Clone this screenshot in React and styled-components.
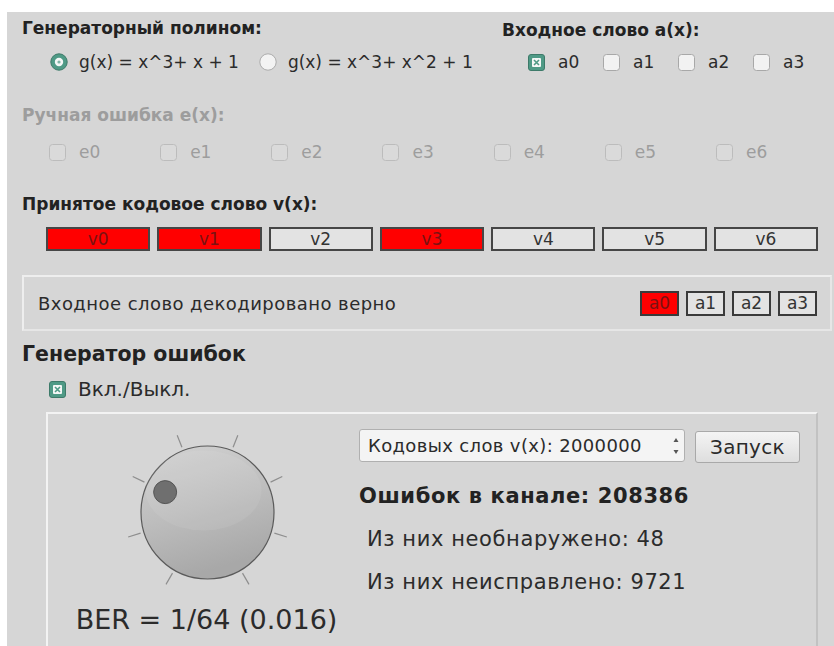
import React from "react";
import styled, { createGlobalStyle } from "styled-components";

const Global = createGlobalStyle`
  html, body { margin: 0; padding: 0; background: #ffffff; }
  body { font-family: "DejaVu Sans", "Noto Sans", sans-serif; overflow: hidden; }
`;

const TEAL = "#4f9a86";

const Window = styled.div`
  margin: 12px 0 0 7px;
  width: 827px;
  height: 634px;
  background: #d6d6d6;
  color: #2b2b2b;
  overflow: hidden;
  padding-left: 15px;
  box-sizing: border-box;
`;

const TopGrid = styled.div`
  display: flex;
`;

const Column = styled.div`
  width: ${(p) => p.$w || "auto"};
`;

const Title = styled.div`
  font-weight: bold;
  font-size: ${(p) => p.$size || 17}px;
  line-height: ${(p) => p.$lh || 20}px;
  height: ${(p) => p.$lh || 20}px;
  margin-top: ${(p) => p.$top || 0}px;
  color: ${(p) => (p.$muted ? "#9d9d9d" : "#222")};
  white-space: nowrap;
`;

const Row = styled.div`
  display: flex;
  align-items: center;
  height: 20px;
  margin-top: ${(p) => p.$top || 0}px;
  padding-left: ${(p) => p.$pad || 0}px;
  gap: ${(p) => p.$gap || 0}px;
  font-size: 17px;
  white-space: nowrap;
`;

const Option = styled.label`
  display: flex;
  align-items: center;
  gap: ${(p) => p.$gap || 13}px;
  width: ${(p) => p.$w || "auto"};
  color: ${(p) => (p.$muted ? "#9d9d9d" : "#2b2b2b")};
  font-size: ${(p) => p.$size || 17}px;
`;

const ErrorGrid = styled.div`
  display: grid;
  grid-template-columns: repeat(7, 111.17px);
  align-items: center;
  height: 20px;
  margin-top: 17px;
  padding-left: 27px;
`;

const BitGrid = styled.div`
  display: grid;
  grid-template-columns: repeat(7, 104.3px);
  column-gap: 7px;
  margin-top: 13px;
  padding-left: 24px;
`;

const Bit = styled.div`
  height: 24px;
  box-sizing: border-box;
  border: 2px solid #464646;
  background: ${(p) => (p.$on ? "#ff0000" : "#e3e3e3")};
  color: ${(p) => (p.$on ? "#7a1212" : "#333")};
  font-size: 17px;
  line-height: 20px;
  text-align: center;
`;

const ResultPanel = styled.div`
  display: flex;
  align-items: center;
  justify-content: space-between;
  margin-top: 24px;
  width: 810px;
  height: 56px;
  box-sizing: border-box;
  border: 2px solid #eeeeee;
  border-right-color: #e6e6e6;
  border-bottom-color: #e6e6e6;
  padding: 0 13px 0 14px;
`;

const ResultText = styled.span`
  font-size: 18px;
  letter-spacing: 0.45px;
  white-space: nowrap;
`;

const SmallBits = styled.div`
  display: flex;
  gap: 7px;
`;

const SmallBit = styled.div`
  width: 39px;
  height: 25px;
  box-sizing: border-box;
  border: 2px solid #3a3a3a;
  background: ${(p) => (p.$on ? "#ff0000" : "#e3e3e3")};
  color: ${(p) => (p.$on ? "#7a1212" : "#333")};
  font-size: 17px;
  line-height: 21px;
  text-align: center;
`;

const GenPanel = styled.div`
  display: flex;
  margin: 13px 0 0 24px;
  width: 772px;
  height: 300px;
  box-sizing: border-box;
  border-top: 2px solid #f3f3f3;
  border-left: 2px solid #f3f3f3;
  border-right: 2px solid #c2c2c2;
  padding: 13px 0 0 27px;
`;

const KnobColumn = styled.div`
  width: 263px;
  display: flex;
  flex-direction: column;
  align-items: center;
`;

const Ber = styled.div`
  margin-top: 7px;
  font-size: 27px;
  line-height: 32px;
  white-space: nowrap;
  color: #2b2b2b;
`;

const StatsColumn = styled.div`
  margin-left: 21px;
  padding-top: 2px;
`;

const SpinRow = styled.div`
  display: flex;
  gap: 10px;
`;

const SpinBox = styled.div`
  display: flex;
  align-items: center;
  width: 326px;
  height: 33px;
  box-sizing: border-box;
  border: 1px solid #b0b0b0;
  border-radius: 3px;
  background: #f4f4f4;
  padding-left: 8px;
  font-size: 18px;
  letter-spacing: 0.36px;
  white-space: nowrap;
`;

const SpinText = styled.span`
  flex: 1;
`;

const SpinArrows = styled.div`
  width: 16px;
  height: 100%;
  display: flex;
  align-items: center;
  justify-content: center;
`;

const Button = styled.button`
  width: 105px;
  height: 32px;
  margin-top: 2px;
  border: 1px solid #a9a9a9;
  border-radius: 3px;
  background: linear-gradient(#f4f4f4, #dedede);
  font-family: inherit;
  font-size: 20px;
  letter-spacing: 0.3px;
  color: #2b2b2b;
  padding: 0;
`;

const Stat = styled.div`
  margin-top: ${(p) => p.$top}px;
  padding-left: ${(p) => (p.$bold ? 0 : 8)}px;
  font-size: 21px;
  letter-spacing: 0.6px;
  line-height: 24px;
  font-weight: ${(p) => (p.$bold ? "bold" : "normal")};
  color: ${(p) => (p.$bold ? "#222" : "#2b2b2b")};
  white-space: nowrap;
`;

function Radio({ checked }) {
  return (
    <svg width="18" height="18" viewBox="0 0 18 18">
      {checked ? (
        <>
          <circle cx="9" cy="9" r="8.2" fill={TEAL} stroke="#3d7a69" strokeWidth="1" />
          <circle cx="9" cy="9" r="4.2" fill="#f4f7f6" />
          <circle cx="9" cy="9" r="1.6" fill="#7fb5a6" />
        </>
      ) : (
        <circle cx="9" cy="9" r="8.2" fill="#f3f3f3" stroke="#ababab" strokeWidth="1" />
      )}
    </svg>
  );
}

function Check({ checked, muted }) {
  return (
    <svg width="17" height="17" viewBox="0 0 17 17">
      {checked ? (
        <>
          <rect x="0.5" y="0.5" width="16" height="16" rx="2.5" fill={TEAL} stroke="#3d7a69" />
          <rect x="4" y="4" width="9" height="9" rx="1" fill="#f4f7f6" />
          <path d="M6 6 L11 11 M11 6 L6 11" stroke={TEAL} strokeWidth="1.6" />
        </>
      ) : (
        <rect
          x="0.5"
          y="0.5"
          width="16"
          height="16"
          rx="3"
          fill={muted ? "#dadada" : "#f2f2f2"}
          stroke={muted ? "#bcbcbc" : "#a8a8a8"}
        />
      )}
    </svg>
  );
}

function Knob() {
  const cx = 90.5;
  const cy = 85.5;
  const ticks = [];
  for (let i = 0; i < 8; i++) {
    const a = ((-150 + (300 / 7) * i) * Math.PI) / 180;
    ticks.push(
      <line
        key={i}
        x1={cx + 70 * Math.sin(a)}
        y1={cy - 70 * Math.cos(a)}
        x2={cx + 83 * Math.sin(a)}
        y2={cy - 83 * Math.cos(a)}
        stroke="#8e8e8e"
        strokeWidth="1.2"
      />
    );
  }
  const da = (-64.3 * Math.PI) / 180;
  return (
    <svg width="180" height="170" viewBox="0 0 180 170">
      <defs>
        <linearGradient id="knobFace" x1="0" y1="0" x2="0.3" y2="1">
          <stop offset="0" stopColor="#d2d2d2" />
          <stop offset="0.55" stopColor="#bdbdbd" />
          <stop offset="1" stopColor="#a8a8a8" />
        </linearGradient>
      </defs>
      {ticks}
      <circle cx={cx} cy={cy} r="66.5" fill="url(#knobFace)" stroke="#5a5a5a" strokeWidth="1.2" />
      <ellipse cx={cx - 4} cy={cy - 22} rx="58" ry="40" fill="#ffffff" opacity="0.07" />
      <circle
        cx={cx + 47 * Math.sin(da)}
        cy={cy - 47 * Math.cos(da)}
        r="11.5"
        fill="#6f6f6f"
        stroke="#555"
        strokeWidth="1"
      />
    </svg>
  );
}

function SpinArrowIcon() {
  return (
    <svg width="8" height="24" viewBox="0 0 8 24">
      <path d="M4 4 L6.5 8 L1.5 8 Z" fill="#555" />
      <path d="M4 20 L6.5 16 L1.5 16 Z" fill="#555" />
    </svg>
  );
}

const inputBits = ["a0", "a1", "a2", "a3"];
const errorBits = ["e0", "e1", "e2", "e3", "e4", "e5", "e6"];
const received = [
  { name: "v0", on: true },
  { name: "v1", on: true },
  { name: "v2", on: false },
  { name: "v3", on: true },
  { name: "v4", on: false },
  { name: "v5", on: false },
  { name: "v6", on: false },
];

export default function App() {
  return (
    <>
      <Global />
      <Window>
        <TopGrid>
          <Column $w="480px">
            <Title $top={6}>Генераторный полином:</Title>
            <Row $top={14} $pad={28} $gap={20}>
              <Option $gap={11}>
                <Radio checked />
                g(x) = x^3+ x + 1
              </Option>
              <Option $gap={11}>
                <Radio />
                g(x) = x^3+ x^2 + 1
              </Option>
            </Row>
          </Column>
          <Column>
            <Title $top={8}>Входное слово a(x):</Title>
            <Row $top={12} $pad={26}>
              {inputBits.map((b, i) => (
                <Option key={b} $w="75px" $gap={13}>
                  <Check checked={i === 0} />
                  {b}
                </Option>
              ))}
            </Row>
          </Column>
        </TopGrid>

        <Title $top={33} $muted>
          Ручная ошибка e(x):
        </Title>
        <ErrorGrid>
          {errorBits.map((b) => (
            <Option key={b} $gap={13} $muted>
              <Check muted />
              {b}
            </Option>
          ))}
        </ErrorGrid>

        <Title $top={32}>Принятое кодовое слово v(x):</Title>
        <BitGrid>
          {received.map((v) => (
            <Bit key={v.name} $on={v.on}>
              {v.name}
            </Bit>
          ))}
        </BitGrid>

        <ResultPanel>
          <ResultText>Входное слово декодировано верно</ResultText>
          <SmallBits>
            {inputBits.map((b, i) => (
              <SmallBit key={b} $on={i === 0}>
                {b}
              </SmallBit>
            ))}
          </SmallBits>
        </ResultPanel>

        <Title $top={12} $size={20.5} $lh={22}>
          Генератор ошибок
        </Title>
        <Row $top={14} $pad={27}>
          <Option $gap={12} $size={20}>
            <Check checked />
            Вкл./Выкл.
          </Option>
        </Row>

        <GenPanel>
          <KnobColumn>
            <Knob />
            <Ber>BER = 1/64 (0.016)</Ber>
          </KnobColumn>
          <StatsColumn>
            <SpinRow>
              <SpinBox>
                <SpinText>Кодовых слов v(x): 2000000</SpinText>
                <SpinArrows>
                  <SpinArrowIcon />
                </SpinArrows>
              </SpinBox>
              <Button>Запуск</Button>
            </SpinRow>
            <Stat $bold $top={21}>
              Ошибок в канале: 208386
            </Stat>
            <Stat $top={19}>Из них необнаружено: 48</Stat>
            <Stat $top={19}>Из них неисправлено: 9721</Stat>
          </StatsColumn>
        </GenPanel>
      </Window>
    </>
  );
}
